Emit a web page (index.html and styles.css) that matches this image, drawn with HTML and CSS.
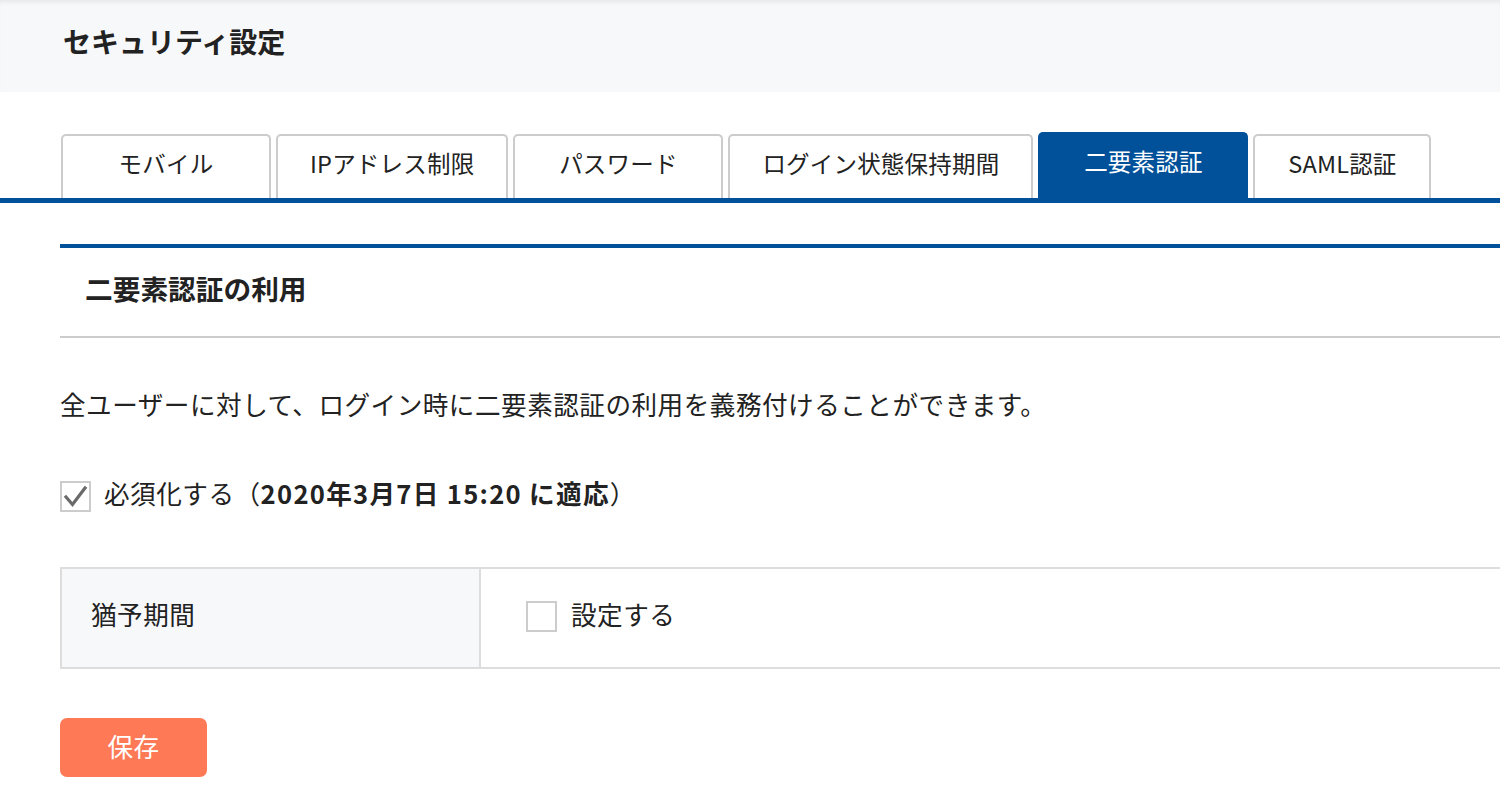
FILE: index.html
```html
<!DOCTYPE html>
<html lang="ja">
<head>
<meta charset="utf-8">
<title>セキュリティ設定</title>
<link rel="stylesheet" href="styles.css">
</head>
<body>
<header class="page-header">
  <h1 class="page-title">セキュリティ設定</h1>
</header>

<nav class="tabs">
  <div class="tab">モバイル</div>
  <div class="tab tab--ip">IPアドレス制限</div>
  <div class="tab">パスワード</div>
  <div class="tab">ログイン状態保持期間</div>
  <div class="tab tab--active">二要素認証</div>
  <div class="tab tab--saml">SAML認証</div>
</nav>

<main class="content">
  <section class="panel">
    <div class="panel-head">
      <h2 class="panel-title">二要素認証の利用</h2>
    </div>
    <p class="desc">全ユーザーに対して、ログイン時に二要素認証の利用を義務付けることができます。</p>
    <label class="check-row">
      <span class="checkbox checkbox--checked">
        <svg viewBox="0 0 31 31" width="31" height="31"><path d="M6 16 L12.5 23.5 L25 7" fill="none" stroke="#6a6a6a" stroke-width="3.2" stroke-linecap="square" stroke-linejoin="miter"/></svg>
      </span>
      <span class="check-label">必須化する（<b>2020年3月7日 15:20 に適応</b>）</span>
    </label>

    <div class="setting-table">
      <div class="setting-label">猶予期間</div>
      <div class="setting-value">
        <label class="check-row check-row--inline">
          <span class="checkbox"></span>
          <span class="check-label">設定する</span>
        </label>
      </div>
    </div>

    <button class="save-btn" type="button">保存</button>
  </section>
</main>
</body>
</html>
```

FILE: styles.css
```css
html, body {
  margin: 0;
  padding: 0;
}
body {
  width: 1500px;
  overflow-x: hidden;
  font-family: "Noto Sans CJK JP", "Noto Sans", sans-serif;
  color: #222;
  background: #fff;
}

.page-header {
  height: 92px;
  box-sizing: border-box;
  background: #f7f8fa;
  display: flex;
  align-items: center;
  padding: 0 0 10px 63px;
  box-shadow: inset 0 5px 5px -3px rgba(0, 0, 0, 0.07);
}
.page-title {
  margin: 0;
  font-size: 28px;
  font-weight: 700;
  line-height: 1;
  color: #222;
}

.tabs {
  margin-top: 40px;
  padding-left: 61px;
  display: flex;
  align-items: flex-end;
  gap: 5px;
  border-bottom: 5px solid #00509a;
}
.tab {
  height: 64px;
  box-sizing: border-box;
  min-width: 210px;
  padding: 0 32px 9px;
  border: 2px solid #cccccc;
  border-bottom: none;
  border-radius: 5px 5px 0 0;
  background: #fff;
  display: flex;
  align-items: center;
  justify-content: center;
  font-size: 23.5px;
  color: #222;
  white-space: nowrap;
  letter-spacing: 0.2px;
}
.tab--ip {
  min-width: 231px;
}
.tab--saml {
  min-width: 178px;
}
.tab--active {
  height: 66px;
  background: #00509a;
  border-color: #00509a;
  color: #fff;
  padding-bottom: 11px;
}

.content {
  padding-left: 60px;
  margin-right: -10px;
}
.panel {
  margin-top: 41px;
}
.panel-head {
  height: 94px;
  box-sizing: border-box;
  border-top: 4px solid #00509a;
  border-bottom: 2px solid #cccccc;
  display: flex;
  align-items: center;
  padding: 0 0 6px 25px;
}
.panel-title {
  margin: 0;
  font-size: 27.7px;
  font-weight: 700;
  line-height: 1;
  color: #222;
}

.desc {
  margin: 48px 0 0;
  font-size: 25.6px;
  line-height: 36px;
  color: #222;
  letter-spacing: 0.5px;
}

.check-row {
  margin-top: 56px;
  display: flex;
  align-items: center;
  gap: 13px;
  height: 36px;
}
.check-row--inline {
  margin-top: 0;
  gap: 14px;
}
.checkbox {
  width: 31px;
  height: 31px;
  box-sizing: border-box;
  border: 2px solid #cccccc;
  background: #fff;
  position: relative;
  flex: none;
}
.checkbox svg {
  position: absolute;
  left: -2px;
  top: -2px;
}
.check-label {
  font-size: 25.6px;
  line-height: 36px;
  padding-bottom: 6px;
  color: #222;
  white-space: nowrap;
  letter-spacing: 0.5px;
}
.check-label b {
  font-weight: 700;
  letter-spacing: 1.3px;
}

.setting-table {
  margin-top: 53px;
  display: flex;
  height: 102px;
  box-sizing: border-box;
  border: 2px solid #dddddd;
}
.setting-label {
  width: 419px;
  flex: none;
  box-sizing: border-box;
  background: #f7f8fa;
  border-right: 2px solid #dddddd;
  display: flex;
  align-items: center;
  padding: 0 0 9px 29px;
  font-size: 25.6px;
  color: #222;
  letter-spacing: 0.5px;
}
.setting-value {
  flex: 1;
  display: flex;
  align-items: center;
  padding: 0 0 3px 45px;
}

.save-btn {
  margin-top: 49px;
  width: 147px;
  height: 59px;
  border: none;
  border-radius: 7px;
  background: #fe7a57;
  color: #fff;
  font-family: "Noto Sans CJK JP", "Noto Sans", sans-serif;
  font-size: 25.6px;
  line-height: 1;
  padding: 0 0 4px;
  cursor: pointer;
  display: block;
  letter-spacing: 0.5px;
}
```
